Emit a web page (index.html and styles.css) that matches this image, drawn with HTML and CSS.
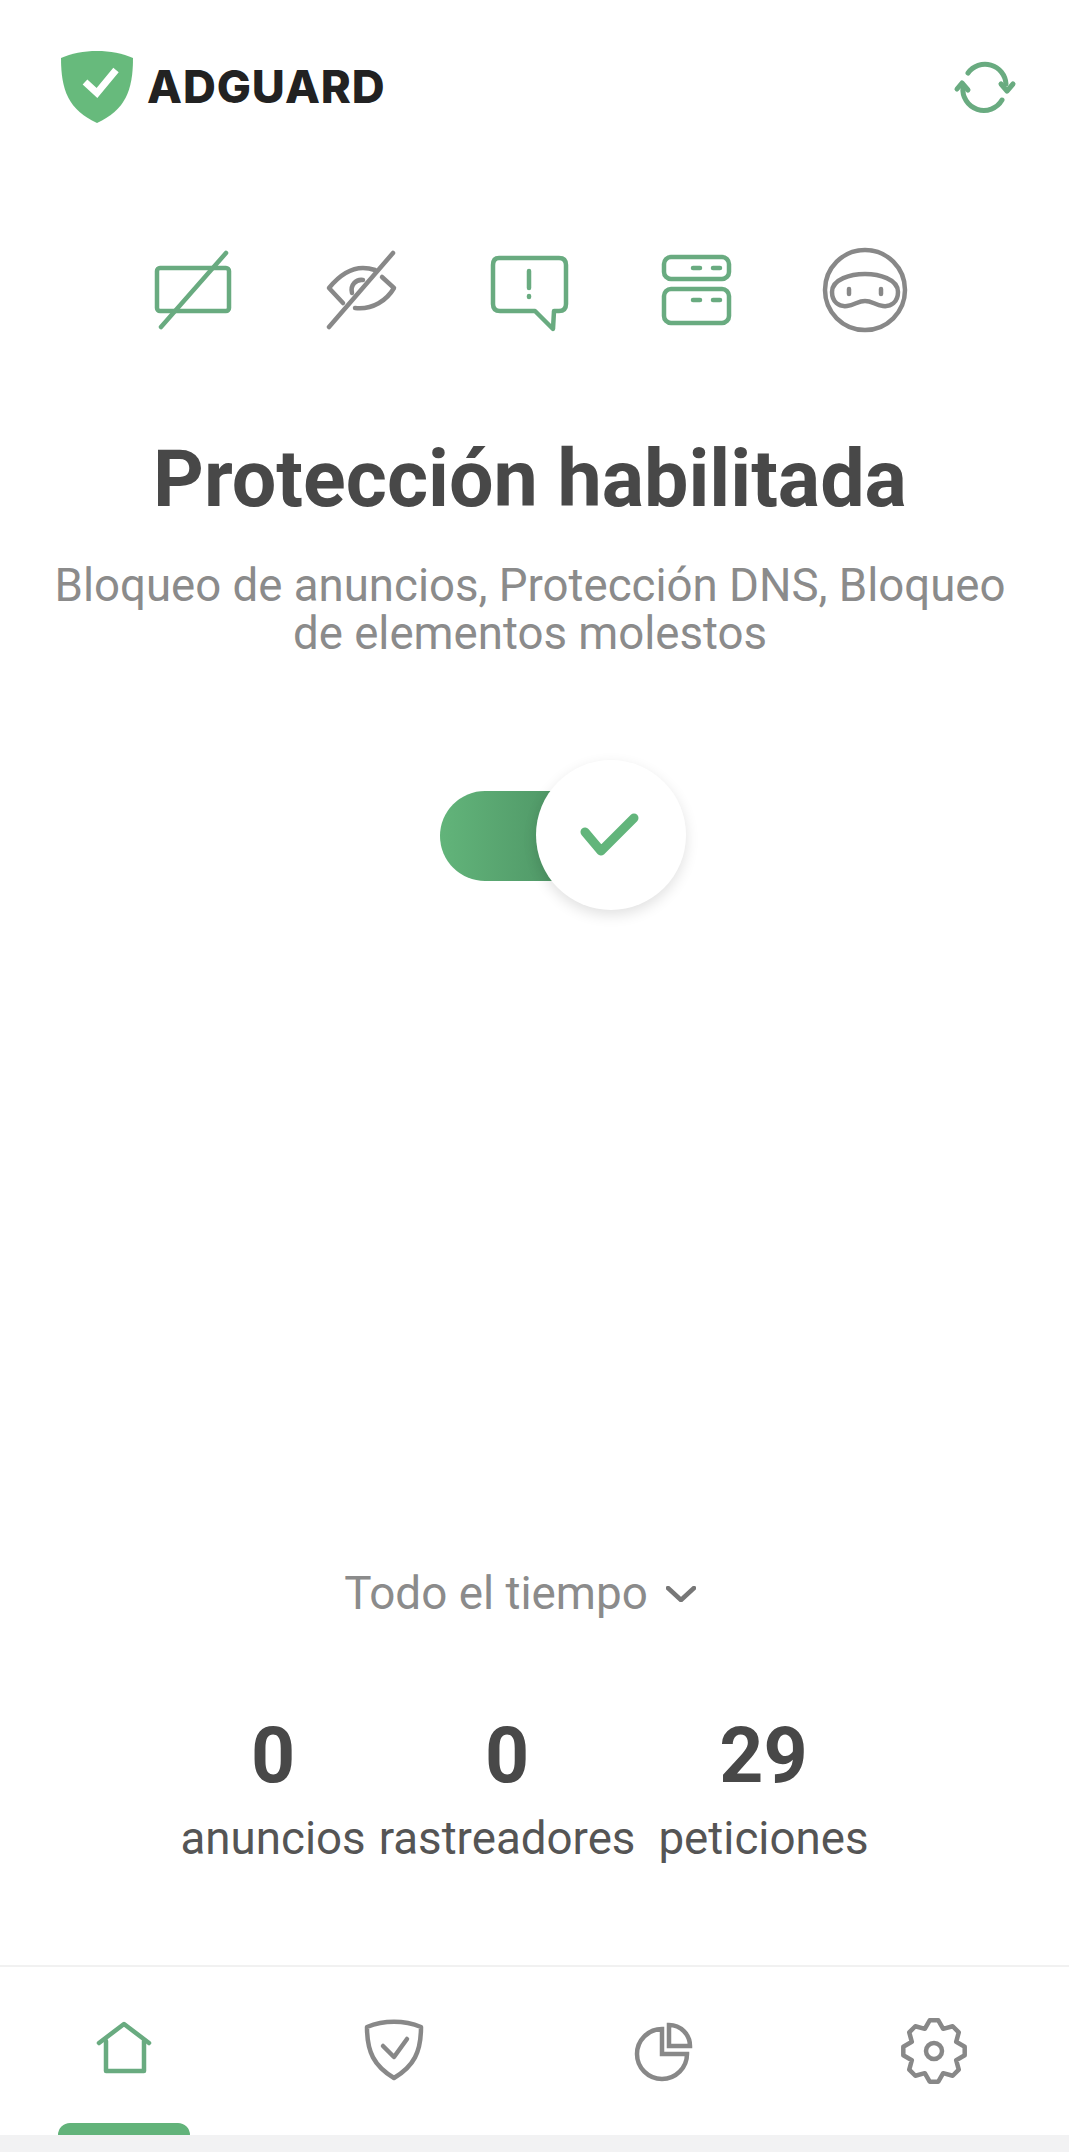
FILE: index.html
```html
<!DOCTYPE html>
<html lang="es">
<head>
<meta charset="utf-8">
<title>AdGuard</title>
<link rel="stylesheet" href="styles.css">
</head>
<body>
<div class="app">
  <header class="top">
    <div class="brand">
      <svg class="logo" viewBox="0 0 72 72" aria-hidden="true">
        <path class="logo-shield" d="M36 0C23 0 10 2.500 0 7C0 40 8 59 36 72C64 59 72 40 72 7C62 2.500 49 0 36 0Z"/>
        <path class="logo-check" d="M24 31L36 42L55 19"/>
      </svg>
      <span class="brand-name">ADGUARD</span>
    </div>
    <svg class="icon refresh" viewBox="0 0 80 80" aria-hidden="true">
      <g class="stroke green thin">
        <path d="M23 27A21 21 0 0 1 61 38"/>
        <path d="M56 38L62 45L68 38"/>
        <path d="M57 54A21 21 0 0 1 18 41"/>
        <path d="M12 43L17 37L23 44"/>
      </g>
    </svg>
  </header>

  <main class="main">
    <div class="features">
      <svg class="feature" viewBox="-4 -4 88 88" aria-hidden="true">
        <g class="stroke green">
          <rect x="4" y="18" width="72" height="43" rx="3"/>
          <path d="M8 77L73 3"/>
        </g>
      </svg>
      <svg class="feature" viewBox="-4 -4 88 88" aria-hidden="true">
        <g class="stroke grey">
          <path d="M8 77L72 3"/>
          <path d="M22 53L8 38C17 27 29 18 42 18C47 18 51 19 54 20"/>
          <path d="M61 27L73 38C66 50 52 60 34 58"/>
          <path d="M31 43C29 35 35 29 42 30"/>
        </g>
      </svg>
      <svg class="feature" viewBox="-4 -4 88 88" aria-hidden="true">
        <g class="stroke green">
          <path d="M10 8H70Q77 8 77 15V54Q77 61 70 61H65L64 79L46 61H11Q4 61 4 54V15Q4 8 10 8Z"/>
          <path d="M40 21V38"/>
          <path d="M40 46V47"/>
        </g>
      </svg>
      <svg class="feature" viewBox="-4 -4 88 88" aria-hidden="true">
        <g class="stroke green">
          <rect x="7" y="7" width="65" height="22" rx="7"/>
          <rect x="7" y="39" width="65" height="34" rx="7"/>
          <path d="M36 18H43M56 18H63M36 50H43M56 50H63"/>
        </g>
      </svg>
      <svg class="feature" viewBox="-4 -4 88 88" aria-hidden="true">
        <g class="stroke grey">
          <circle cx="40" cy="40" r="40"/>
          <path d="M40 24C54 24 73 29 73 42C73 52 66 57 58 56C50 55 47 51 40 51C33 51 30 55 22 56C14 57 7 52 7 42C7 29 26 24 40 24Z"/>
          <path d="M24 39V44M56 39V44"/>
        </g>
      </svg>
    </div>

    <h1 class="title">Protección habilitada</h1>
    <p class="subtitle">Bloqueo de anuncios, Protección DNS, Bloqueo<br>de elementos molestos</p>

    <div class="toggle">
      <div class="track"></div>
      <div class="knob">
        <svg class="knob-check" viewBox="0 0 60 46" aria-hidden="true">
          <path d="M5 19L21 38L54 5"/>
        </svg>
      </div>
    </div>

    <div class="period">
      <span>Todo el tiempo</span>
      <svg class="chevron" viewBox="0 0 30 16" aria-hidden="true">
        <path d="M2 2L15 14L28 2"/>
      </svg>
    </div>

    <div class="stats">
      <div class="stat stat-ads"><strong>0</strong><span>anuncios</span></div>
      <div class="stat stat-trackers"><strong>0</strong><span>rastreadores</span></div>
      <div class="stat stat-requests"><strong>29</strong><span>peticiones</span></div>
    </div>
  </main>

  <nav class="nav">
    <div class="nav-item active">
      <svg class="nav-icon" viewBox="0 0 80 80" aria-hidden="true">
        <g class="stroke green">
          <path d="M15 32L40 13L65 32"/>
          <path d="M22 30V60H60V30"/>
        </g>
      </svg>
    </div>
    <div class="nav-item">
      <svg class="nav-icon" viewBox="0 0 80 80" aria-hidden="true">
        <g class="stroke grey">
          <path d="M13 16C30 9 50 9 67 16C67 41 60 55 40 67C20 55 13 41 13 16Z"/>
          <path d="M29 35L40 46L53 28"/>
        </g>
      </svg>
    </div>
    <div class="nav-item">
      <svg class="nav-icon" viewBox="0 0 80 80" aria-hidden="true">
        <g class="stroke grey butt">
          <path d="M38 18V43H63A25 25 0 1 1 38 18Z"/>
          <path d="M45 14V35H66A21 21 0 0 0 45 14Z"/>
        </g>
      </svg>
    </div>
    <div class="nav-item">
      <svg class="nav-icon" viewBox="0 0 80 80" aria-hidden="true">
        <g class="stroke grey" transform="translate(40 40)">
          <polygon points="4.310,-30.700 9.180,-22.170 18.660,-24.760 24.760,-18.660 22.170,-9.180 30.700,-4.310 30.700,4.310 22.170,9.180 24.760,18.660 18.660,24.760 9.180,22.170 4.310,30.700 -4.310,30.700 -9.180,22.170 -18.660,24.760 -24.760,18.660 -22.170,9.180 -30.700,4.310 -30.700,-4.310 -22.170,-9.180 -24.760,-18.660 -18.660,-24.760 -9.180,-22.170 -4.310,-30.700"/>
          <circle r="8"/>
        </g>
      </svg>
    </div>
  </nav>
  <div class="system-bar"></div>
</div>
</body>
</html>
```

FILE: styles.css
```css
* { box-sizing: border-box; }

html, body {
  margin: 0;
  padding: 0;
  background: #fff;
}

.app {
  width: 1069px;
  height: 2152px;
  display: flex;
  flex-direction: column;
  overflow: hidden;
  font-family: Roboto, "Liberation Sans", sans-serif;
}

/* Header */
.top {
  display: flex;
  align-items: flex-start;
  justify-content: space-between;
  padding: 51px 44px 0 61px;
  height: 246px;
}

.brand {
  display: flex;
  align-items: center;
  gap: 14px;
}

.logo {
  width: 72px;
  height: 72px;
}

.logo-shield { fill: #67ba7c; }

.logo-check {
  fill: none;
  stroke: #fff;
  stroke-width: 7;
}

.brand-name {
  font-family: Inter, "Liberation Sans", sans-serif;
  font-weight: 800;
  font-size: 45.500px;
  letter-spacing: 0.900px;
  line-height: 72px;
  color: #222;
}

.icon {
  width: 80px;
  height: 80px;
  margin-top: -5px;
}

/* Shared icon strokes */
.stroke {
  fill: none;
  stroke-width: 4.500;
  stroke-linecap: round;
  stroke-linejoin: round;
}

.stroke.thin { stroke-width: 5; }
.stroke.butt { stroke-linecap: butt; stroke-linejoin: miter; stroke-width: 4.500; }
.green { stroke: #69ab80; }
.grey { stroke: #888; }

/* Main */
.main {
  flex: 1;
  display: flex;
  flex-direction: column;
  align-items: center;
  padding-right: 9px;
}

.features {
  display: flex;
  justify-content: center;
  gap: 80px;
  margin-right: 2px;
}

.feature {
  width: 88px;
  height: 88px;
}

.title {
  margin: 100px 0 0;
  font-size: 79px;
  line-height: 90px;
  font-weight: 700;
  color: #484848;
}

.subtitle {
  margin: 38px 0 0;
  font-size: 45.600px;
  line-height: 48px;
  font-weight: 400;
  text-align: center;
  color: #8b8b8b;
}

/* Toggle */
.toggle {
  position: relative;
  width: 246px;
  height: 90px;
  margin: 133px 0 0 65px;
}

.track {
  width: 172px;
  height: 90px;
  border-radius: 45px 0 0 45px;
  background: linear-gradient(90deg, #62b47a, #478a5e);
}

.knob {
  position: absolute;
  left: 96px;
  top: -31px;
  width: 150px;
  height: 150px;
  border-radius: 50%;
  background: #fff;
  box-shadow: 0 5px 14px rgba(0, 0, 0, .12);
  display: flex;
  align-items: center;
  justify-content: center;
}

.knob-check {
  width: 60px;
  height: 46px;
  margin: 2px 0 0 -1px;
  fill: none;
  stroke: #62b57b;
  stroke-width: 9;
  stroke-linecap: round;
  stroke-linejoin: round;
}

/* Period */
.period {
  display: flex;
  align-items: center;
  gap: 18px;
  margin: 687px 20px 0 0;
  font-size: 45.800px;
  line-height: 52px;
  color: #8b8b8b;
}

.chevron {
  width: 30px;
  height: 16px;
  fill: none;
  stroke: #777;
  stroke-width: 4.500;
  stroke-linecap: round;
  stroke-linejoin: round;
}

/* Stats */
.stats {
  display: flex;
  margin: 91px 0 0 -11px;
}

.stat {
  display: flex;
  flex-direction: column;
  align-items: center;
}

.stat-ads { margin-right: 13px; }
.stat-trackers { margin-right: 23px; }

.stat strong {
  font-size: 77px;
  line-height: 90px;
  font-weight: 700;
  color: #484848;
}

.stat span {
  margin-top: 12px;
  font-size: 45.700px;
  line-height: 52px;
  color: #555;
}

/* Navigation */
.nav {
  display: flex;
  gap: 138px;
  height: 170px;
  padding-left: 58px;
  border-top: 2px solid #f1f1f1;
}

.nav-item {
  position: relative;
  width: 132px;
  display: flex;
  justify-content: center;
  padding-top: 44px;
}

.nav-icon {
  width: 80px;
  height: 80px;
}

.nav-item.active::after {
  content: "";
  position: absolute;
  left: 0;
  right: 0;
  bottom: 0;
  height: 12px;
  border-radius: 12px 12px 0 0;
  background: #62b37a;
}

.system-bar {
  height: 17px;
  background: #f2f2f3;
}
```
